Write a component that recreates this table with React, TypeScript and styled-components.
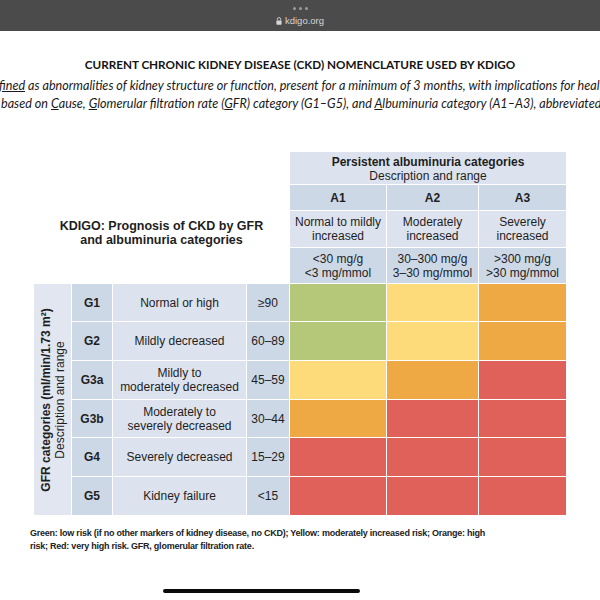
import { Fragment } from "react";
import styled, { createGlobalStyle } from "styled-components";

const GlobalStyle = createGlobalStyle`
  html, body {
    margin: 0;
    padding: 0;
    background: #ffffff;
  }
  body {
    width: 600px;
    height: 600px;
    overflow: hidden;
    font-family: "Liberation Sans", Arial, sans-serif;
    color: #1b1b1b;
  }
`;

const TopBar = styled.div`
  height: 31px;
  background-color: #4b4b4b;
  display: flex;
  flex-direction: column;
  align-items: center;
  padding-top: 7px;
  box-sizing: border-box;
`;

const Dots = styled.div`
  display: flex;
  gap: 3px;
  height: 3px;
`;

const Dot = styled.span`
  width: 3px;
  height: 3px;
  border-radius: 50%;
  background-color: #9c9c9c;
`;

const Address = styled.div`
  display: flex;
  align-items: center;
  gap: 3px;
  margin-top: 5px;
  font-family: "Liberation Sans", Arial, sans-serif;
  font-size: 9.5px;
  color: #d6d6d6;
`;

const Title = styled.h1`
  margin: 25px 0 0;
  font-family: Lato, "Open Sans", sans-serif;
  font-weight: 700;
  font-size: 11.7px;
  line-height: 16px;
  text-align: center;
  color: #141414;
`;

const Intro = styled.div`
  margin-top: 5px;
  white-space: nowrap;
  overflow: hidden;
  font-family: Lato, "Open Sans", sans-serif;
  font-style: italic;
  font-size: 12.6px;
  line-height: 18px;
  color: #1a1a1a;
`;

const IntroLine = styled.div<{ indent: number }>`
  margin-left: ${p => p.indent}px;
`;

const Table = styled.div`
  margin: 39px 0 0 34px;
  width: 532px;
  display: grid;
  grid-template-columns: 37px 40px 133px 42px 96px 91px 87px;
  grid-template-rows: 32px 25px 36px 35px 37px 38px 38px 37px 38px 38px;
  gap: 1px;
  background-color: #ffffff;
  font-size: 12px;
  line-height: 14px;
  color: #1e1e1e;
`;

const Cell = styled.div<{ bg?: string; bold?: boolean }>`
  display: flex;
  flex-direction: column;
  align-items: center;
  justify-content: center;
  text-align: center;
  background-color: ${p => p.bg ?? "transparent"};
  font-weight: ${p => (p.bold ? 700 : 400)};
`;

const CornerTitle = styled.div`
  grid-column: 1 / 5;
  grid-row: 1 / 5;
  padding-top: 31px;
  display: flex;
  align-items: center;
  justify-content: center;
  text-align: center;
  font-weight: 700;
  font-size: 12.5px;
  line-height: 14px;
`;

const AlbHeader = styled(Cell)`
  grid-column: 5 / 8;
  grid-row: 1;
  padding-top: 1px;
`;

const SideLabel = styled.div`
  grid-column: 1;
  grid-row: 5 / 11;
  background-color: #e2e6f0;
  display: flex;
  align-items: center;
  justify-content: center;
  overflow: hidden;
`;

const Rotated = styled.div`
  transform: rotate(-90deg);
  white-space: nowrap;
  text-align: center;
  line-height: 14px;
  font-size: 12px;
`;

const Risk = styled.div<{ level: keyof typeof riskColors }>`
  background-color: ${p => riskColors[p.level]};
`;

const Footnote = styled.p`
  margin: 12px 0 0 30px;
  width: 456px;
  font-family: "Liberation Sans", Arial, sans-serif;
  font-weight: 700;
  font-size: 9px;
  letter-spacing: -0.24px;
  line-height: 12.5px;
  color: #222;
`;

const HomeBar = styled.div`
  position: fixed;
  left: 163px;
  top: 589px;
  width: 197px;
  height: 4px;
  border-radius: 2px;
  background-color: #0a0a0a;
`;

const riskColors = {
  g: "#b5c879",
  y: "#fddb7b",
  o: "#eea944",
  r: "#e0615a",
};

const DARK = "#cdd8e7";
const LIGHT = "#dde3ee";

type Level = keyof typeof riskColors;

const gfrRows: { g: string; desc: string[]; range: string; risk: Level[] }[] = [
  { g: "G1", desc: ["Normal or high"], range: "≥90", risk: ["g", "y", "o"] },
  { g: "G2", desc: ["Mildly decreased"], range: "60–89", risk: ["g", "y", "o"] },
  { g: "G3a", desc: ["Mildly to", "moderately decreased"], range: "45–59", risk: ["y", "o", "r"] },
  { g: "G3b", desc: ["Moderately to", "severely decreased"], range: "30–44", risk: ["o", "r", "r"] },
  { g: "G4", desc: ["Severely decreased"], range: "15–29", risk: ["r", "r", "r"] },
  { g: "G5", desc: ["Kidney failure"], range: "<15", risk: ["r", "r", "r"] },
];

const albCols = [
  { a: "A1", desc: ["Normal to mildly", "increased"], range: ["<30 mg/g", "<3 mg/mmol"] },
  { a: "A2", desc: ["Moderately", "increased"], range: ["30–300 mg/g", "3–30 mg/mmol"] },
  { a: "A3", desc: ["Severely", "increased"], range: [">300 mg/g", ">30 mg/mmol"] },
];

function Lock() {
  return (
    <svg width="6" height="8" viewBox="0 0 6 8">
      <path d="M1.3 3.5V2.3a1.7 1.7 0 0 1 3.4 0v1.2" fill="none" stroke="#d6d6d6" strokeWidth="0.9" />
      <rect x="0.4" y="3.5" width="5.2" height="4.2" rx="0.6" fill="#d6d6d6" />
    </svg>
  );
}

function Lines({ lines }: { lines: string[] }) {
  return (
    <>
      {lines.map(l => (
        <span key={l}>{l}</span>
      ))}
    </>
  );
}

export default function App() {
  return (
    <>
      <GlobalStyle />
      <TopBar>
        <Dots>
          <Dot />
          <Dot />
          <Dot />
        </Dots>
        <Address>
          <Lock />
          kdigo.org
        </Address>
      </TopBar>

      <Title>CURRENT CHRONIC KIDNEY DISEASE (CKD) NOMENCLATURE USED BY KDIGO</Title>

      <Intro>
        <IntroLine indent={-1}>
          <u>fined</u> as abnormalities of kidney structure or function, present for a minimum of 3 months, with implications for health
        </IntroLine>
        <IntroLine indent={1}>
          based on <u>C</u>ause, <u>G</u>lomerular filtration rate (<u>G</u>FR) category (G1–G5), and <u>A</u>lbuminuria category (A1–A3), abbreviated as CGA
        </IntroLine>
      </Intro>

      <Table>
        <CornerTitle>
          KDIGO: Prognosis of CKD by GFR
          <br />
          and albuminuria categories
        </CornerTitle>

        <AlbHeader bg={LIGHT}>
          <b>Persistent albuminuria categories</b>
          <span>Description and range</span>
        </AlbHeader>
        {albCols.map(c => (
          <Cell key={c.a} bg={DARK} bold>
            {c.a}
          </Cell>
        ))}
        {albCols.map(c => (
          <Cell key={c.a + "d"} bg={LIGHT}>
            <Lines lines={c.desc} />
          </Cell>
        ))}
        {albCols.map(c => (
          <Cell key={c.a + "r"} bg={DARK}>
            <Lines lines={c.range} />
          </Cell>
        ))}

        <SideLabel>
          <Rotated>
            <b>GFR categories (ml/min/1.73 m²)</b>
            <br />
            Description and range
          </Rotated>
        </SideLabel>
        {gfrRows.map(r => (
          <Fragment key={r.g}>
            <Cell bg={DARK} bold>
              {r.g}
            </Cell>
            <Cell bg={LIGHT}>
              <Lines lines={r.desc} />
            </Cell>
            <Cell bg={DARK}>{r.range}</Cell>
            {r.risk.map((lv, i) => (
              <Risk key={i} level={lv} />
            ))}
          </Fragment>
        ))}
      </Table>

      <Footnote>
        Green: low risk (if no other markers of kidney disease, no CKD); Yellow: moderately increased risk; Orange: high
        risk; Red: very high risk. GFR, glomerular filtration rate.
      </Footnote>

      <HomeBar />
    </>
  );
}
